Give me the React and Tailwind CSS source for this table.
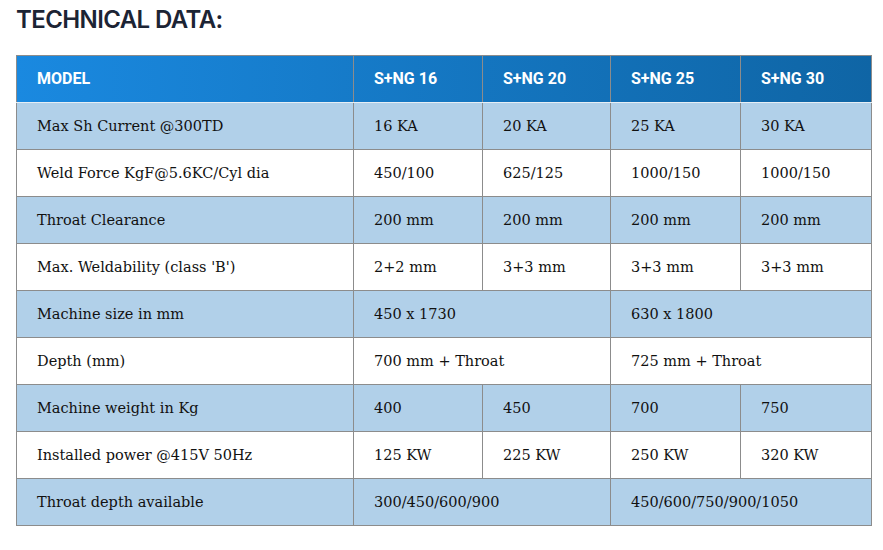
import React from "react";

const rows = [
  { label: "Max Sh Current @300TD", cells: ["16 KA", "20 KA", "25 KA", "30 KA"] },
  { label: "Weld Force KgF@5.6KC/Cyl dia", cells: ["450/100", "625/125", "1000/150", "1000/150"] },
  { label: "Throat Clearance", cells: ["200 mm", "200 mm", "200 mm", "200 mm"] },
  { label: "Max. Weldability (class 'B')", cells: ["2+2 mm", "3+3 mm", "3+3 mm", "3+3 mm"] },
  { label: "Machine size in mm", cells: ["450 x 1730", "630 x 1800"], span: true },
  { label: "Depth (mm)", cells: ["700 mm + Throat", "725 mm + Throat"], span: true },
  { label: "Machine weight in Kg", cells: ["400", "450", "700", "750"] },
  { label: "Installed power @415V 50Hz", cells: ["125 KW", "225 KW", "250 KW", "320 KW"] },
  { label: "Throat depth available", cells: ["300/450/600/900", "450/600/750/900/1050"], span: true },
];

const serif = { fontFamily: "'DejaVu Serif', 'Liberation Serif', serif" };

export default function App() {
  return (
    <div className="w-[883px] h-[550px] bg-white overflow-hidden">
      <h1
        className="pl-[16px] pt-[6px] text-[24px] leading-[28px] font-semibold tracking-[-0.6px] text-[#1c2434]"
        style={{ fontFamily: "Inter, 'Liberation Sans', sans-serif" }}
      >
        TECHNICAL DATA:
      </h1>
      <table className="ml-[16px] mt-[21px] border-collapse table-fixed w-[855px]">
        <colgroup>
          <col className="w-[337px]" />
          <col className="w-[129px]" />
          <col className="w-[128px]" />
          <col className="w-[130px]" />
          <col className="w-[131px]" />
        </colgroup>
        <thead>
          <tr
            className="h-[47px] bg-gradient-to-r from-[#1a89e0] to-[#0f65a5] text-white text-[16px] font-bold"
            style={{ fontFamily: "Roboto, 'Liberation Sans', sans-serif" }}
          >
            <th className="border border-[#8c8c8c] border-b-[#e6eef5] text-left pl-[20px] font-bold">MODEL</th>
            <th className="border border-[#8c8c8c] border-b-[#e6eef5] text-left pl-[20px] font-bold">S+NG 16</th>
            <th className="border border-[#8c8c8c] border-b-[#e6eef5] text-left pl-[20px] font-bold">S+NG 20</th>
            <th className="border border-[#8c8c8c] border-b-[#e6eef5] text-left pl-[20px] font-bold">S+NG 25</th>
            <th className="border border-[#8c8c8c] border-b-[#e6eef5] text-left pl-[20px] font-bold">S+NG 30</th>
          </tr>
        </thead>
        <tbody className="text-[14.5px] text-[#111]" style={serif}>
          {rows.map((r, i) => (
            <tr key={i} className={`h-[47px] ${i % 2 === 0 ? "bg-[#b1d0e9]" : "bg-white"}`}>
              <td className="border border-[#8c8c8c] pl-[20px] pt-[1px]">{r.label}</td>
              {r.cells.map((c, j) => (
                <td
                  key={j}
                  colSpan={r.span ? 2 : 1}
                  className="border border-[#8c8c8c] pl-[20px] pt-[1px]"
                >
                  {c}
                </td>
              ))}
            </tr>
          ))}
        </tbody>
      </table>
    </div>
  );
}
